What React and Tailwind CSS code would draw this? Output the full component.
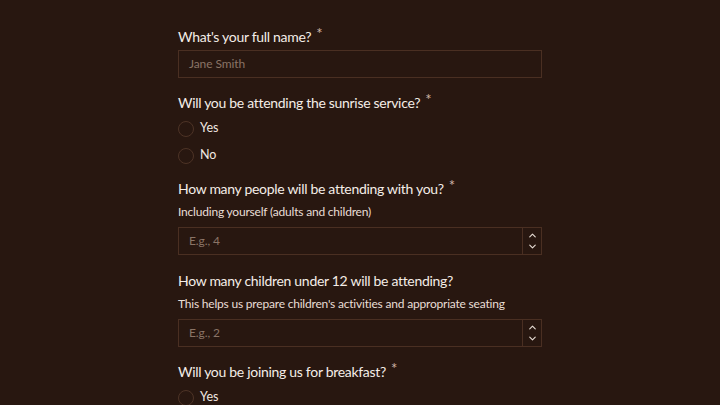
import { ChevronUp, ChevronDown } from "lucide-react";

const font = { fontFamily: "Lato, 'Noto Sans', sans-serif" };

function Label({ children, required }) {
  return (
    <div className="flex items-start whitespace-nowrap text-[14px] leading-[20px] tracking-[-0.3px] text-[#f4ede7]">
      <span>{children}</span>
      {required && <span className="ml-[5px] -mt-[4px] text-[15px] text-[#cfb4a6]">*</span>}
    </div>
  );
}

function Hint({ children }) {
  return (
    <div className="mt-[3px] whitespace-nowrap text-[12px] leading-[20px] tracking-[-0.2px] text-[#e9ded6]">
      {children}
    </div>
  );
}

function Radio({ label }) {
  return (
    <label className="flex h-[27px] items-center gap-[6px] text-[12.5px] text-[#f1e8e1]">
      <span className="h-[16px] w-[16px] rounded-full border border-[#4d3326]" />
      <span>{label}</span>
    </label>
  );
}

function NumberBox({ placeholder }) {
  return (
    <div className="mt-[5px] flex h-[28px] border border-[#4a2f22]">
      <div className="flex flex-1 items-center px-[10px] text-[12px] tracking-[-0.1px] text-[#8a7466]">
        {placeholder}
      </div>
      <div className="flex w-[19px] flex-col items-center justify-between border-l border-[#4a2f22] py-[2px] text-[#e6dcd4]">
        <ChevronUp size={11} strokeWidth={2.5} />
        <ChevronDown size={11} strokeWidth={2.5} />
      </div>
    </div>
  );
}

export default function App() {
  return (
    <div className="min-h-screen bg-[#281710]" style={font}>
      <div className="mx-auto w-[364px] pt-[27px]">
        <Label required>What's your full name?</Label>
        <div className="mt-[3px] flex h-[28px] items-center border border-[#4a2f22] px-[10px] text-[12px] tracking-[-0.1px] text-[#8a7466]">
          Jane Smith
        </div>

        <div className="mt-[15px]">
          <Label required>Will you be attending the sunrise service?</Label>
          <div className="mt-[2px]">
            <Radio label="Yes" />
            <Radio label="No" />
          </div>
        </div>

        <div className="mt-[10px]">
          <Label required>How many people will be attending with you?</Label>
          <Hint>Including yourself (adults and children)</Hint>
          <NumberBox placeholder="E.g., 4" />
        </div>

        <div className="mt-[16px]">
          <Label>How many children under 12 will be attending?</Label>
          <Hint>This helps us prepare children's activities and appropriate seating</Hint>
          <NumberBox placeholder="E.g., 2" />
        </div>

        <div className="mt-[15px]">
          <Label required>Will you be joining us for breakfast?</Label>
          <div className="mt-[2px]">
            <Radio label="Yes" />
            <Radio label="No" />
          </div>
        </div>
      </div>
    </div>
  );
}
